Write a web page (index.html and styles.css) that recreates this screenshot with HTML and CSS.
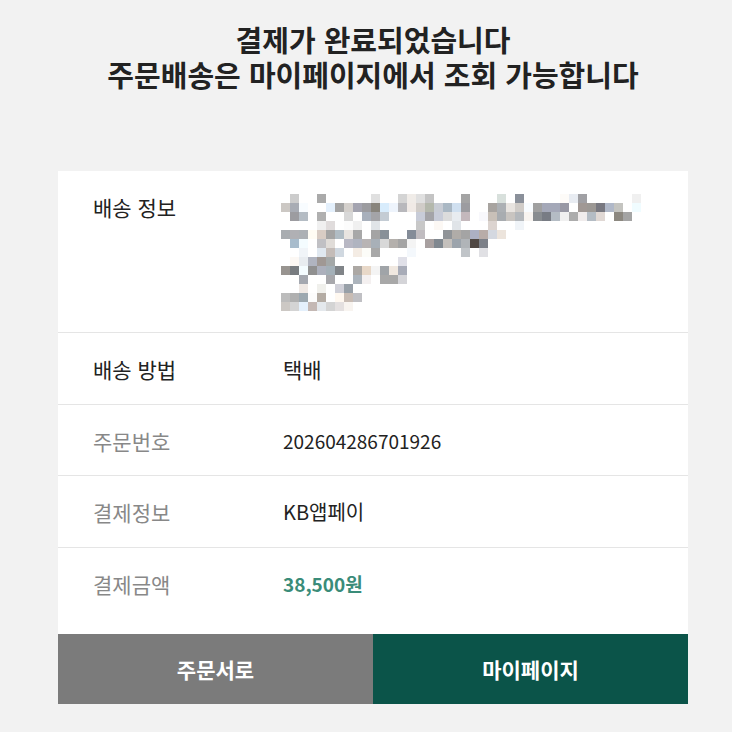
FILE: index.html
```html
<!DOCTYPE html>
<html lang="ko">
<head>
    <meta charset="UTF-8">
    <meta name="viewport" content="width=device-width, initial-scale=1.0">
    <title>결제 완료</title>
    <link rel="stylesheet" href="styles.css">
</head>
<body>
    <div class="complete">
        <h1 class="complete-title">
            <span class="title-line">결제가 완료되었습니다</span>
            <span class="title-line">주문배송은 마이페이지에서 조회 가능합니다</span>
        </h1>

        <div class="order-box">
            <div class="order-row first">
                <div class="order-label">배송 정보</div>
                <div class="order-value">
                    <!-- 주소는 모자이크 처리 -->
                    <svg class="mosaic" width="360" height="117" viewBox="0 0 40 13" shape-rendering="crispEdges">
                        <g>
                            <rect x="1" y="0" width="1" height="1" fill="#cccccc"/>
                            <rect x="4" y="0" width="1" height="1" fill="#aaaaaa"/>
                            <rect x="10" y="0" width="1" height="1" fill="#e0e0e0"/>
                            <rect x="13" y="0" width="1" height="1" fill="#d4d4d4"/>
                            <rect x="14" y="0" width="1" height="1" fill="#f0ece8"/>
                            <rect x="15" y="0" width="1" height="1" fill="#e0e0e0"/>
                            <rect x="16" y="0" width="1" height="1" fill="#c4c4c4"/>
                            <rect x="20" y="0" width="1" height="1" fill="#a4a4a4"/>
                            <rect x="24" y="0" width="1" height="1" fill="#d8e0dc"/>
                            <rect x="26" y="0" width="1" height="1" fill="#8a909a"/>
                            <rect x="31" y="0" width="1" height="1" fill="#fdfbf8"/>
                            <rect x="32" y="0" width="1" height="1" fill="#e8ecf2"/>
                            <rect x="33" y="0" width="1" height="1" fill="#a0a0a4"/>
                            <rect x="39" y="0" width="1" height="1" fill="#f0f0f0"/>
                        </g>
                        <g>
                            <rect x="0" y="1" width="1" height="1" fill="#ccc8c4"/>
                            <rect x="1" y="1" width="1" height="1" fill="#a8acb4"/>
                            <rect x="2" y="1" width="1" height="1" fill="#f8fcff"/>
                            <rect x="5" y="1" width="1" height="1" fill="#e4f0fc"/>
                            <rect x="6" y="1" width="1" height="1" fill="#a4a4a4"/>
                            <rect x="7" y="1" width="1" height="1" fill="#d4d0cc"/>
                            <rect x="8" y="1" width="1" height="1" fill="#a4a4b0"/>
                            <rect x="9" y="1" width="1" height="1" fill="#9c9ca0"/>
                            <rect x="10" y="1" width="1" height="1" fill="#88847c"/>
                            <rect x="11" y="1" width="1" height="1" fill="#d8ecfc"/>
                            <rect x="12" y="1" width="1" height="1" fill="#eef4fc"/>
                            <rect x="13" y="1" width="1" height="1" fill="#b8b8bc"/>
                            <rect x="14" y="1" width="1" height="1" fill="#f0eae6"/>
                            <rect x="15" y="1" width="1" height="1" fill="#d0ccc8"/>
                            <rect x="16" y="1" width="1" height="1" fill="#b4b8ac"/>
                            <rect x="17" y="1" width="1" height="1" fill="#c8ccd4"/>
                            <rect x="18" y="1" width="1" height="1" fill="#aab8c4"/>
                            <rect x="19" y="1" width="1" height="1" fill="#d0e0f0"/>
                            <rect x="20" y="1" width="1" height="1" fill="#9c9ca0"/>
                            <rect x="23" y="1" width="1" height="1" fill="#a8a4a0"/>
                            <rect x="24" y="1" width="1" height="1" fill="#acb0b4"/>
                            <rect x="25" y="1" width="1" height="1" fill="#e8e4e0"/>
                            <rect x="26" y="1" width="1" height="1" fill="#d0ccc8"/>
                            <rect x="27" y="1" width="1" height="1" fill="#f8fcff"/>
                            <rect x="28" y="1" width="1" height="1" fill="#a0a0a0"/>
                            <rect x="29" y="1" width="1" height="1" fill="#a4a8b8"/>
                            <rect x="30" y="1" width="1" height="1" fill="#a4a8b8"/>
                            <rect x="31" y="1" width="1" height="1" fill="#9898a4"/>
                            <rect x="33" y="1" width="1" height="1" fill="#a09894"/>
                            <rect x="34" y="1" width="1" height="1" fill="#9c9894"/>
                            <rect x="35" y="1" width="1" height="1" fill="#787880"/>
                            <rect x="36" y="1" width="1" height="1" fill="#b0b8c8"/>
                            <rect x="37" y="1" width="1" height="1" fill="#c4c4c0"/>
                            <rect x="39" y="1" width="1" height="1" fill="#f0fcff"/>
                        </g>
                        <g>
                            <rect x="1" y="2" width="1" height="1" fill="#9c9ca0"/>
                            <rect x="2" y="2" width="1" height="1" fill="#b4bcc4"/>
                            <rect x="4" y="2" width="1" height="1" fill="#b0b0b0"/>
                            <rect x="7" y="2" width="1" height="1" fill="#d8d8d8"/>
                            <rect x="9" y="2" width="1" height="1" fill="#a8b0bc"/>
                            <rect x="10" y="2" width="1" height="1" fill="#a4a4a8"/>
                            <rect x="11" y="2" width="1" height="1" fill="#c4ccd4"/>
                            <rect x="15" y="2" width="1" height="1" fill="#c8ccd8"/>
                            <rect x="16" y="2" width="1" height="1" fill="#a4a4a8"/>
                            <rect x="17" y="2" width="1" height="1" fill="#c8ccd8"/>
                            <rect x="18" y="2" width="1" height="1" fill="#dcdcdc"/>
                            <rect x="19" y="2" width="1" height="1" fill="#e8ecf0"/>
                            <rect x="20" y="2" width="1" height="1" fill="#c4b8bc"/>
                            <rect x="22" y="2" width="1" height="1" fill="#f8f8fc"/>
                            <rect x="23" y="2" width="1" height="1" fill="#c8c0b8"/>
                            <rect x="24" y="2" width="1" height="1" fill="#a8acb0"/>
                            <rect x="25" y="2" width="1" height="1" fill="#c8c4c0"/>
                            <rect x="26" y="2" width="1" height="1" fill="#b4b8bc"/>
                            <rect x="27" y="2" width="1" height="1" fill="#f8f4f0"/>
                            <rect x="28" y="2" width="1" height="1" fill="#888c90"/>
                            <rect x="29" y="2" width="1" height="1" fill="#787c84"/>
                            <rect x="30" y="2" width="1" height="1" fill="#b4bcc4"/>
                            <rect x="31" y="2" width="1" height="1" fill="#f0f0f0"/>
                            <rect x="32" y="2" width="1" height="1" fill="#acacac"/>
                            <rect x="33" y="2" width="1" height="1" fill="#f0ecec"/>
                            <rect x="34" y="2" width="1" height="1" fill="#b4bcc4"/>
                            <rect x="35" y="2" width="1" height="1" fill="#e0d8d4"/>
                            <rect x="37" y="2" width="1" height="1" fill="#8c8880"/>
                            <rect x="38" y="2" width="1" height="1" fill="#a4a4a4"/>
                        </g>
                        <g>
                            <rect x="4" y="3" width="1" height="1" fill="#f0f0f0"/>
                            <rect x="5" y="3" width="1" height="1" fill="#e0dcdc"/>
                            <rect x="7" y="3" width="1" height="1" fill="#fcfcfc"/>
                            <rect x="8" y="3" width="1" height="1" fill="#f0f0f0"/>
                            <rect x="10" y="3" width="1" height="1" fill="#e0e4e8"/>
                            <rect x="15" y="3" width="1" height="1" fill="#c8c8c8"/>
                            <rect x="17" y="3" width="1" height="1" fill="#fcf8f4"/>
                            <rect x="19" y="3" width="1" height="1" fill="#e0e4e8"/>
                            <rect x="23" y="3" width="1" height="1" fill="#dcd4d0"/>
                            <rect x="26" y="3" width="1" height="1" fill="#f0f4f8"/>
                        </g>
                        <g>
                            <rect x="0" y="4" width="1" height="1" fill="#a8acb0"/>
                            <rect x="1" y="4" width="1" height="1" fill="#b0b0b4"/>
                            <rect x="2" y="4" width="1" height="1" fill="#acb0b4"/>
                            <rect x="3" y="4" width="1" height="1" fill="#fffcf4"/>
                            <rect x="4" y="4" width="1" height="1" fill="#d8ccc4"/>
                            <rect x="5" y="4" width="1" height="1" fill="#a4a4a4"/>
                            <rect x="6" y="4" width="1" height="1" fill="#b0bcc4"/>
                            <rect x="7" y="4" width="1" height="1" fill="#e8e4e0"/>
                            <rect x="8" y="4" width="1" height="1" fill="#a8a8a8"/>
                            <rect x="10" y="4" width="1" height="1" fill="#a4a4a4"/>
                            <rect x="11" y="4" width="1" height="1" fill="#889098"/>
                            <rect x="14" y="4" width="1" height="1" fill="#848c98"/>
                            <rect x="15" y="4" width="1" height="1" fill="#c0bcc0"/>
                            <rect x="18" y="4" width="1" height="1" fill="#909498"/>
                            <rect x="19" y="4" width="1" height="1" fill="#b0aca8"/>
                            <rect x="20" y="4" width="1" height="1" fill="#a4a4a4"/>
                            <rect x="21" y="4" width="1" height="1" fill="#acb0c4"/>
                            <rect x="22" y="4" width="1" height="1" fill="#b8aca8"/>
                            <rect x="23" y="4" width="1" height="1" fill="#d4d8e0"/>
                            <rect x="24" y="4" width="1" height="1" fill="#ece4dc"/>
                        </g>
                        <g>
                            <rect x="1" y="5" width="1" height="1" fill="#a8bccc"/>
                            <rect x="2" y="5" width="1" height="1" fill="#f4fcff"/>
                            <rect x="4" y="5" width="1" height="1" fill="#c0c0c4"/>
                            <rect x="5" y="5" width="1" height="1" fill="#e0dcd8"/>
                            <rect x="7" y="5" width="1" height="1" fill="#b8b8c4"/>
                            <rect x="8" y="5" width="1" height="1" fill="#b0b4c0"/>
                            <rect x="9" y="5" width="1" height="1" fill="#b8b4b4"/>
                            <rect x="10" y="5" width="1" height="1" fill="#a8b0b8"/>
                            <rect x="11" y="5" width="1" height="1" fill="#d8d8d8"/>
                            <rect x="12" y="5" width="1" height="1" fill="#b4b0ac"/>
                            <rect x="13" y="5" width="1" height="1" fill="#a4a4a4"/>
                            <rect x="14" y="5" width="1" height="1" fill="#f4f4f4"/>
                            <rect x="16" y="5" width="1" height="1" fill="#a8a0a0"/>
                            <rect x="17" y="5" width="1" height="1" fill="#808890"/>
                            <rect x="18" y="5" width="1" height="1" fill="#c4c0bc"/>
                            <rect x="19" y="5" width="1" height="1" fill="#9ca4ac"/>
                            <rect x="20" y="5" width="1" height="1" fill="#b0b4b8"/>
                            <rect x="21" y="5" width="1" height="1" fill="#504844"/>
                            <rect x="22" y="5" width="1" height="1" fill="#7c8088"/>
                        </g>
                        <g>
                            <rect x="2" y="6" width="1" height="1" fill="#f0f4f8"/>
                            <rect x="4" y="6" width="1" height="1" fill="#e0e8f0"/>
                            <rect x="5" y="6" width="1" height="1" fill="#c4bcb8"/>
                            <rect x="6" y="6" width="1" height="1" fill="#d0d8e0"/>
                            <rect x="8" y="6" width="1" height="1" fill="#f4ece4"/>
                            <rect x="9" y="6" width="1" height="1" fill="#fcfcf8"/>
                            <rect x="10" y="6" width="1" height="1" fill="#a8a8a8"/>
                            <rect x="14" y="6" width="1" height="1" fill="#f4f8fc"/>
                            <rect x="20" y="6" width="1" height="1" fill="#c0c4c8"/>
                            <rect x="22" y="6" width="1" height="1" fill="#e0e0e4"/>
                        </g>
                        <g>
                            <rect x="1" y="7" width="1" height="1" fill="#fcf8f4"/>
                            <rect x="2" y="7" width="1" height="1" fill="#e8ecf0"/>
                            <rect x="3" y="7" width="1" height="1" fill="#b0b4c0"/>
                            <rect x="4" y="7" width="1" height="1" fill="#a09894"/>
                            <rect x="5" y="7" width="1" height="1" fill="#a4a8a8"/>
                            <rect x="13" y="7" width="1" height="1" fill="#e0e0e8"/>
                        </g>
                        <g>
                            <rect x="0" y="8" width="1" height="1" fill="#989490"/>
                            <rect x="1" y="8" width="1" height="1" fill="#787c80"/>
                            <rect x="2" y="8" width="1" height="1" fill="#f4fcff"/>
                            <rect x="3" y="8" width="1" height="1" fill="#909090"/>
                            <rect x="4" y="8" width="1" height="1" fill="#acb0bc"/>
                            <rect x="5" y="8" width="1" height="1" fill="#a4b0b8"/>
                            <rect x="6" y="8" width="1" height="1" fill="#808488"/>
                            <rect x="8" y="8" width="1" height="1" fill="#aca8a4"/>
                            <rect x="9" y="8" width="1" height="1" fill="#e8d8c8"/>
                            <rect x="10" y="8" width="1" height="1" fill="#f4f4f4"/>
                            <rect x="11" y="8" width="1" height="1" fill="#a0a4a8"/>
                            <rect x="12" y="8" width="1" height="1" fill="#f0e8e0"/>
                            <rect x="13" y="8" width="1" height="1" fill="#a8acb8"/>
                        </g>
                        <g>
                            <rect x="2" y="9" width="1" height="1" fill="#a4a8b0"/>
                            <rect x="5" y="9" width="1" height="1" fill="#a8a8ac"/>
                            <rect x="8" y="9" width="1" height="1" fill="#acb4bc"/>
                            <rect x="9" y="9" width="1" height="1" fill="#f4f0f0"/>
                            <rect x="11" y="9" width="1" height="1" fill="#a8a8a8"/>
                            <rect x="12" y="9" width="1" height="1" fill="#a8a8a8"/>
                            <rect x="13" y="9" width="1" height="1" fill="#d4d4d8"/>
                        </g>
                        <g>
                            <rect x="2" y="10" width="1" height="1" fill="#eee8e4"/>
                            <rect x="4" y="10" width="1" height="1" fill="#f0f0ec"/>
                            <rect x="6" y="10" width="1" height="1" fill="#d0d0d8"/>
                            <rect x="7" y="10" width="1" height="1" fill="#98a0a8"/>
                        </g>
                        <g>
                            <rect x="0" y="11" width="1" height="1" fill="#bcbcbc"/>
                            <rect x="1" y="11" width="1" height="1" fill="#b0b0b0"/>
                            <rect x="2" y="11" width="1" height="1" fill="#9ca8b0"/>
                            <rect x="3" y="11" width="1" height="1" fill="#fcfcfc"/>
                            <rect x="4" y="11" width="1" height="1" fill="#b4aca4"/>
                            <rect x="6" y="11" width="1" height="1" fill="#fff8f0"/>
                            <rect x="7" y="11" width="1" height="1" fill="#c8bcb4"/>
                            <rect x="8" y="11" width="1" height="1" fill="#c0c0c4"/>
                        </g>
                        <g>
                            <rect x="0" y="12" width="1" height="1" fill="#ccc8c4"/>
                            <rect x="1" y="12" width="1" height="1" fill="#d4d4d4"/>
                            <rect x="2" y="12" width="1" height="1" fill="#e4f0fc"/>
                            <rect x="3" y="12" width="1" height="1" fill="#c4b8b4"/>
                            <rect x="4" y="12" width="1" height="1" fill="#e4e8ec"/>
                            <rect x="5" y="12" width="1" height="1" fill="#d4d4d4"/>
                            <rect x="6" y="12" width="1" height="1" fill="#e4e0e0"/>
                            <rect x="7" y="12" width="1" height="1" fill="#f8f4f0"/>
                        </g>
                    </svg>
                </div>
            </div>
            <div class="order-row">
                <div class="order-label">배송 방법</div>
                <div class="order-value">택배</div>
            </div>
            <div class="order-row">
                <div class="order-label muted">주문번호</div>
                <div class="order-value num">202604286701926</div>
            </div>
            <div class="order-row">
                <div class="order-label muted">결제정보</div>
                <div class="order-value pay">KB앱페이</div>
            </div>
            <div class="order-row last">
                <div class="order-label muted">결제금액</div>
                <div class="order-value price">38,500원</div>
            </div>
        </div>

        <div class="btn-group">
            <button class="btn btn-order">주문서로</button>
            <button class="btn btn-mypage">마이페이지</button>
        </div>
    </div>
</body>
</html>
```

FILE: styles.css
```css
/* 결제 완료 페이지 */
body {
    margin: 0;
    padding: 0;
    background-color: #f2f2f2;
    font-family: "Noto Sans CJK KR", "Noto Sans", sans-serif;
    color: #222;
}

.complete {
    width: 630px;
    margin: 0 0 0 58px;
    padding-top: 22px;
}

.complete-title {
    margin: 0 -58px 79px;
    font-size: 29px;
    font-weight: bold;
    text-align: center;
    color: #222;
}

.title-line {
    display: block;
    height: 35px;
    line-height: 35px;
}

.order-box {
    background-color: #fff;
}

.order-row {
    display: flex;
    align-items: flex-start;
    padding: 23px 35px 21.5px;
    border-bottom: 1px solid #e5e5e5;
    font-size: 21px;
    line-height: 26px;
}

.order-row.first {
    padding-bottom: 21px;
}

.order-row.last {
    padding-bottom: 37px;
    border-bottom: none;
}

.order-label {
    width: 190px;
    flex-shrink: 0;
}

.order-label.muted {
    color: #888;
}

.order-value {
    flex: 1;
}

.order-value.num,
.order-value.price {
    font-size: 19px;
}

.order-value.pay {
    font-size: 20px;
}

.mosaic {
    display: block;
    margin-left: -2px;
}

.price {
    font-weight: bold;
    color: #3a8c79;
}

/* 하단 버튼 */
.btn-group {
    display: flex;
}

.btn {
    flex: 1;
    height: 70px;
    border: none;
    font-family: inherit;
    font-size: 21px;
    font-weight: bold;
    color: #fff;
    cursor: pointer;
}

.btn-order {
    background-color: #7b7b7b;
}

.btn-mypage {
    background-color: #0b5449;
}
```
